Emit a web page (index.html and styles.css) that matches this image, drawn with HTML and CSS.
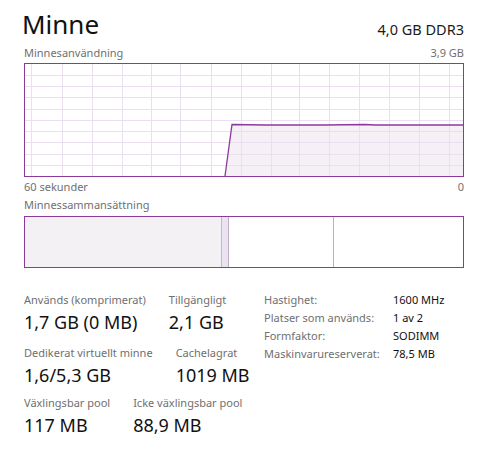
FILE: index.html
```html
<!DOCTYPE html>
<html lang="sv">
<head>
<meta charset="utf-8">
<title>Minne</title>
<link rel="stylesheet" href="styles.css">
</head>
<body>
<div class="page">
  <div class="header">
    <div class="title">Minne</div>
    <div class="kind">4,0 GB DDR3</div>
  </div>
  <div class="caption-row top">
    <span>Minnesanvändning</span>
    <span>3,9 GB</span>
  </div>
  <div class="chart">
    <svg width="438" height="112" viewBox="0 0 438 112">
      <polygon points="200,112 207,60.5 240,61 300,61 340,60.5 350,61 438,61 438,112" fill="#f4f0f5"/>
      <g stroke="#eadfee" stroke-width="1">
        <line x1="0" y1="11.5" x2="438" y2="11.5"/>
        <line x1="0" y1="22.5" x2="438" y2="22.5"/>
        <line x1="0" y1="33.5" x2="438" y2="33.5"/>
        <line x1="0" y1="45.5" x2="438" y2="45.5"/>
        <line x1="0" y1="56.5" x2="438" y2="56.5"/>
        <line x1="0" y1="67.5" x2="438" y2="67.5"/>
        <line x1="0" y1="78.5" x2="438" y2="78.5"/>
        <line x1="0" y1="90.5" x2="438" y2="90.5"/>
        <line x1="0" y1="101.5" x2="438" y2="101.5"/>
        <line x1="6.5" y1="0" x2="6.5" y2="112"/>
        <line x1="37.5" y1="0" x2="37.5" y2="112"/>
        <line x1="67.5" y1="0" x2="67.5" y2="112"/>
        <line x1="97.5" y1="0" x2="97.5" y2="112"/>
        <line x1="126.5" y1="0" x2="126.5" y2="112"/>
        <line x1="155.5" y1="0" x2="155.5" y2="112"/>
        <line x1="186.5" y1="0" x2="186.5" y2="112"/>
        <line x1="216.5" y1="0" x2="216.5" y2="112"/>
        <line x1="246.5" y1="0" x2="246.5" y2="112"/>
        <line x1="274.5" y1="0" x2="274.5" y2="112"/>
        <line x1="304.5" y1="0" x2="304.5" y2="112"/>
        <line x1="334.5" y1="0" x2="334.5" y2="112"/>
        <line x1="364.5" y1="0" x2="364.5" y2="112"/>
        <line x1="394.5" y1="0" x2="394.5" y2="112"/>
        <line x1="424.5" y1="0" x2="424.5" y2="112"/>
      </g>
      <polyline points="200,112 207,60.5 240,61 300,61 340,60.5 350,61 438,61" fill="none" stroke="#8b3a9c" stroke-width="1.3"/>
    </svg>
  </div>
  <div class="caption-row bottom">
    <span>60 sekunder</span>
    <span>0</span>
  </div>
  <div class="caption-row comp-label">
    <span>Minnessammansättning</span>
  </div>
  <div class="composition">
    <div class="seg in-use"></div>
    <div class="seg modified"></div>
    <div class="seg standby"></div>
    <div class="seg free"></div>
  </div>
  <div class="stats">
    <div class="stats-left">
      <div class="stat-row first">
        <div class="stat"><div class="label">Används (komprimerat)</div><div class="value">1,7 GB (0 MB)</div></div>
        <div class="stat"><div class="label">Tillgängligt</div><div class="value">2,1 GB</div></div>
      </div>
      <div class="stat-row">
        <div class="stat"><div class="label">Dedikerat virtuellt minne</div><div class="value">1,6/5,3 GB</div></div>
        <div class="stat"><div class="label">Cachelagrat</div><div class="value">1019 MB</div></div>
      </div>
      <div class="stat-row">
        <div class="stat"><div class="label">Växlingsbar pool</div><div class="value">117 MB</div></div>
        <div class="stat"><div class="label">Icke växlingsbar pool</div><div class="value">88,9 MB</div></div>
      </div>
    </div>
    <div class="props">
      <div class="prop-label">Hastighet:</div><div class="prop-value">1600 MHz</div>
      <div class="prop-label">Platser som används:</div><div class="prop-value">1 av 2</div>
      <div class="prop-label">Formfaktor:</div><div class="prop-value">SODIMM</div>
      <div class="prop-label">Maskinvarureserverat:</div><div class="prop-value">78,5 MB</div>
    </div>
  </div>
</div>
</body>
</html>
```
FILE: styles.css
```css
* { box-sizing: border-box; }
html, body { margin: 0; padding: 0; background: #ffffff; }
body {
  font-family: "Noto Sans", "Open Sans", sans-serif;
  color: #000;
  width: 478px;
  height: 476px;
  overflow: hidden;
}
.page {
  padding: 0 14px 0 24px;
  width: 478px;
}
.header {
  display: flex;
  justify-content: space-between;
  align-items: flex-end;
  height: 41px;
}
.title {
  font-size: 26px;
  line-height: 30px;
  margin-left: -2px;
  padding-bottom: 2px;
  color: #111;
}
.kind {
  font-size: 14.5px;
  line-height: 18px;
  padding-bottom: 3px;
  color: #1a1a1a;
}
.caption-row {
  display: flex;
  justify-content: space-between;
  font-size: 11px;
  color: #707070;
  line-height: 14px;
}
.caption-row.top { height: 22px; padding-top: 5px; }
.caption-row.bottom { height: 19px; padding-top: 3px; }
.caption-row.comp-label { height: 20px; padding-top: 2px; }
.chart {
  width: 440px;
  height: 114px;
  border: 1px solid #8b3a9c;
  display: flex;
}
.chart svg { display: block; }
.composition {
  width: 440px;
  height: 52px;
  border: 1px solid #8b3a9c;
  display: flex;
}
.seg { height: 100%; }
.seg.in-use { width: 196px; background: #f4f1f5; }
.seg.modified { width: 8px; background: #ece3f1; border-left: 1px solid #c8b3d0; border-right: 1px solid #c0aec8; }
.seg.standby { width: 105px; background: #fff; border-right: 1px solid #c0aec8; }
.seg.free { flex: 1; background: #fff; }
.stats {
  display: flex;
  margin-top: 24px;
}
.stats-left {
  width: 240px;
  display: flex;
  flex-direction: column;
}
.stat-row {
  display: flex;
  gap: 23px;
  height: 50px;
}
.stat-row.first { height: 53px; }
.label {
  font-size: 11px;
  line-height: 16px;
  color: #6f6f6f;
  white-space: nowrap;
}
.value {
  font-size: 18px;
  line-height: 28px;
  color: #111;
  white-space: nowrap;
}
.props {
  display: grid;
  grid-template-columns: 129px auto;
  grid-auto-rows: 18px;
  font-size: 11px;
  line-height: 16px;
}
.prop-label { color: #6f6f6f; white-space: nowrap; }
.prop-value { color: #111; white-space: nowrap; }
```
